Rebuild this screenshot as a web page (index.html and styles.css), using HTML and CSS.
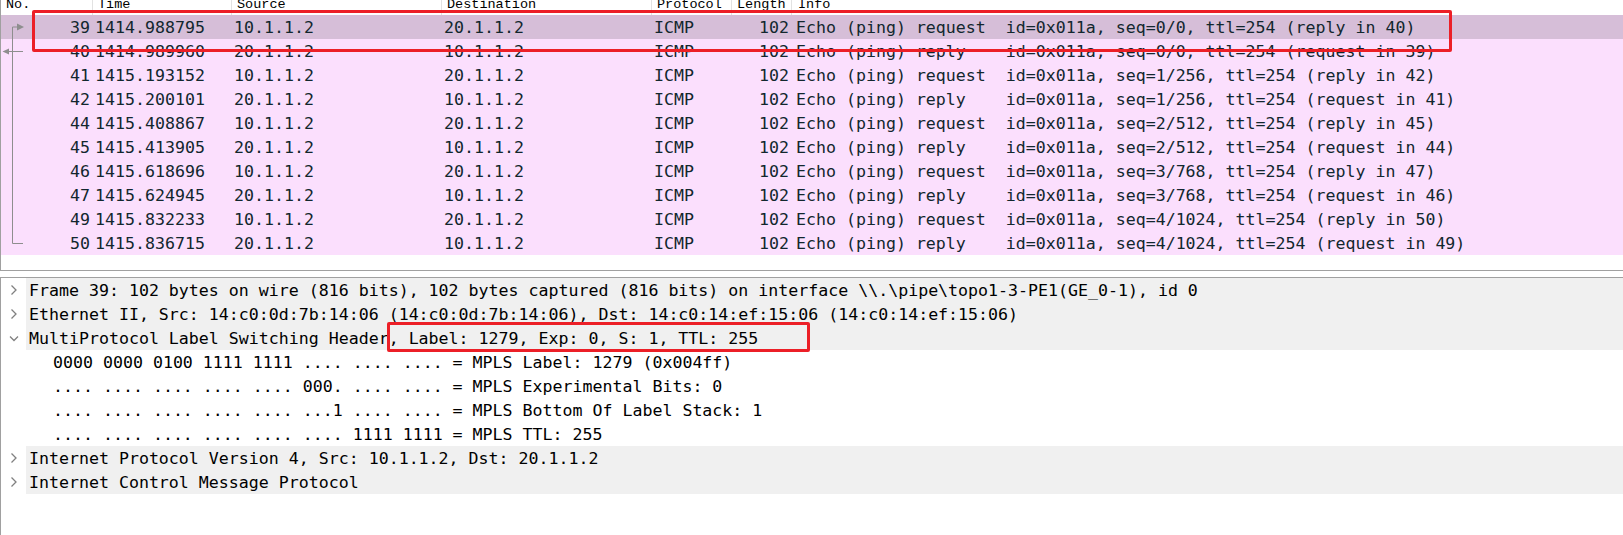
FILE: index.html
```html
<!DOCTYPE html>
<html>
<head>
<meta charset="utf-8">
<link rel="stylesheet" href="styles.css">
</head>
<body>
<div class="app">
  <div class="packets">
    <div class="head">
      <div class="hc">No.</div>
      <div class="hc">Time</div>
      <div class="hc">Source</div>
      <div class="hc">Destination</div>
      <div class="hc">Protocol</div>
      <div class="hc">Length</div>
      <div class="hc last">Info</div>
    </div>
    <div class="row sel">
      <div class="no"><svg class="rel" viewBox="0 0 26 24"><path d="M11.5 12V24M11.5 12H18" /><polygon points="16,8.5 23,12 16,15.5" /></svg><span>39</span></div>
      <div class="c">1414.988795</div><div class="c">10.1.1.2</div><div class="c">20.1.1.2</div><div class="c">ICMP</div><div class="c r">102</div><div class="c info">Echo (ping) request  id=0x011a, seq=0/0, ttl=254 (reply in 40)</div>
    </div>
    <div class="row">
      <div class="no"><svg class="rel" viewBox="0 0 26 24"><path d="M11.5 0V24M7 12.5H22" /><polygon points="1.5,12.5 8,9.5 8,15.5" /></svg><span>40</span></div>
      <div class="c">1414.989960</div><div class="c">20.1.1.2</div><div class="c">10.1.1.2</div><div class="c">ICMP</div><div class="c r">102</div><div class="c info">Echo (ping) reply    id=0x011a, seq=0/0, ttl=254 (request in 39)</div>
    </div>
    <div class="row">
      <div class="no"><svg class="rel" viewBox="0 0 26 24"><path d="M11.5 0V24" /></svg><span>41</span></div>
      <div class="c">1415.193152</div><div class="c">10.1.1.2</div><div class="c">20.1.1.2</div><div class="c">ICMP</div><div class="c r">102</div><div class="c info">Echo (ping) request  id=0x011a, seq=1/256, ttl=254 (reply in 42)</div>
    </div>
    <div class="row">
      <div class="no"><svg class="rel" viewBox="0 0 26 24"><path d="M11.5 0V24" /></svg><span>42</span></div>
      <div class="c">1415.200101</div><div class="c">20.1.1.2</div><div class="c">10.1.1.2</div><div class="c">ICMP</div><div class="c r">102</div><div class="c info">Echo (ping) reply    id=0x011a, seq=1/256, ttl=254 (request in 41)</div>
    </div>
    <div class="row">
      <div class="no"><svg class="rel" viewBox="0 0 26 24"><path d="M11.5 0V24" /></svg><span>44</span></div>
      <div class="c">1415.408867</div><div class="c">10.1.1.2</div><div class="c">20.1.1.2</div><div class="c">ICMP</div><div class="c r">102</div><div class="c info">Echo (ping) request  id=0x011a, seq=2/512, ttl=254 (reply in 45)</div>
    </div>
    <div class="row">
      <div class="no"><svg class="rel" viewBox="0 0 26 24"><path d="M11.5 0V24" /></svg><span>45</span></div>
      <div class="c">1415.413905</div><div class="c">20.1.1.2</div><div class="c">10.1.1.2</div><div class="c">ICMP</div><div class="c r">102</div><div class="c info">Echo (ping) reply    id=0x011a, seq=2/512, ttl=254 (request in 44)</div>
    </div>
    <div class="row">
      <div class="no"><svg class="rel" viewBox="0 0 26 24"><path d="M11.5 0V24" /></svg><span>46</span></div>
      <div class="c">1415.618696</div><div class="c">10.1.1.2</div><div class="c">20.1.1.2</div><div class="c">ICMP</div><div class="c r">102</div><div class="c info">Echo (ping) request  id=0x011a, seq=3/768, ttl=254 (reply in 47)</div>
    </div>
    <div class="row">
      <div class="no"><svg class="rel" viewBox="0 0 26 24"><path d="M11.5 0V24" /></svg><span>47</span></div>
      <div class="c">1415.624945</div><div class="c">20.1.1.2</div><div class="c">10.1.1.2</div><div class="c">ICMP</div><div class="c r">102</div><div class="c info">Echo (ping) reply    id=0x011a, seq=3/768, ttl=254 (request in 46)</div>
    </div>
    <div class="row">
      <div class="no"><svg class="rel" viewBox="0 0 26 24"><path d="M11.5 0V24" /></svg><span>49</span></div>
      <div class="c">1415.832233</div><div class="c">10.1.1.2</div><div class="c">20.1.1.2</div><div class="c">ICMP</div><div class="c r">102</div><div class="c info">Echo (ping) request  id=0x011a, seq=4/1024, ttl=254 (reply in 50)</div>
    </div>
    <div class="row">
      <div class="no"><svg class="rel" viewBox="0 0 26 24"><path d="M11.5 0V12.5H22" /></svg><span>50</span></div>
      <div class="c">1415.836715</div><div class="c">20.1.1.2</div><div class="c">10.1.1.2</div><div class="c">ICMP</div><div class="c r">102</div><div class="c info">Echo (ping) reply    id=0x011a, seq=4/1024, ttl=254 (request in 49)</div>
    </div>
  </div>
  <div class="splitter"></div>
  <div class="details">
    <div class="node"><div class="tw"><svg class="chev" viewBox="0 0 8 12"><polyline points="1.5,1.5 6,6 1.5,10.5" /></svg></div><div class="txt">Frame 39: 102 bytes on wire (816 bits), 102 bytes captured (816 bits) on interface \\.\pipe\topo1-3-PE1(GE_0-1), id 0</div></div>
    <div class="node"><div class="tw"><svg class="chev" viewBox="0 0 8 12"><polyline points="1.5,1.5 6,6 1.5,10.5" /></svg></div><div class="txt">Ethernet II, Src: 14:c0:0d:7b:14:06 (14:c0:0d:7b:14:06), Dst: 14:c0:14:ef:15:06 (14:c0:14:ef:15:06)</div></div>
    <div class="node"><div class="tw"><svg class="chevd" viewBox="0 0 10 7"><polyline points="1,1.5 5,5.5 9,1.5" /></svg></div><div class="txt">MultiProtocol Label Switching Header, Label: 1279, Exp: 0, S: 1, TTL: 255</div></div>
    <div class="node child"><div class="tw"></div><div class="txt">0000 0000 0100 1111 1111 .... .... .... = MPLS Label: 1279 (0x004ff)</div></div>
    <div class="node child"><div class="tw"></div><div class="txt">.... .... .... .... .... 000. .... .... = MPLS Experimental Bits: 0</div></div>
    <div class="node child"><div class="tw"></div><div class="txt">.... .... .... .... .... ...1 .... .... = MPLS Bottom Of Label Stack: 1</div></div>
    <div class="node child"><div class="tw"></div><div class="txt">.... .... .... .... .... .... 1111 1111 = MPLS TTL: 255</div></div>
    <div class="node"><div class="tw"><svg class="chev" viewBox="0 0 8 12"><polyline points="1.5,1.5 6,6 1.5,10.5" /></svg></div><div class="txt">Internet Protocol Version 4, Src: 10.1.1.2, Dst: 20.1.1.2</div></div>
    <div class="node"><div class="tw"><svg class="chev" viewBox="0 0 8 12"><polyline points="1.5,1.5 6,6 1.5,10.5" /></svg></div><div class="txt">Internet Control Message Protocol</div></div>
  </div>
  <div class="mark mark-row"></div>
  <div class="mark mark-label"></div>
</div>
</body>
</html>
```

FILE: styles.css
```css
* { box-sizing: border-box; }
html, body { margin: 0; padding: 0; background: #fff; }
body { font-family: "DejaVu Sans Mono", "Liberation Mono", monospace; }

.app {
  position: relative;
  width: 1623px;
  height: 535px;
  overflow: hidden;
  display: flex;
  flex-direction: column;
}

.packets {
  height: 271px;
  flex: none;
  border-left: 1px solid #a0a0a0;
  border-bottom: 1px solid #a0a0a0;
  background: #fff;
}

.head {
  display: grid;
  grid-template-columns: 92px 139px 210px 210px 80px 60px 1fr;
  height: 15px;
  overflow: hidden;
}
.hc {
  height: 15px;
  line-height: 9px;
  font-family: "Liberation Mono", monospace;
  font-size: 13.5px;
  color: #000;
  padding-left: 5px;
  border-right: 1px solid #e2e2e2;
  white-space: pre;
}
.hc.last { border-right: none; padding-left: 6px; }

.row {
  display: grid;
  grid-template-columns: 92px 139px 210px 210px 80px 60px 1fr;
  height: 24px;
  line-height: 22px;
  padding-top: 2px;
  background: #fbdffd;
  color: #12272e;
  font-size: 16.6px;
  white-space: pre;
}
.row.sel { background: #d6bed8; }

.no {
  display: flex;
  justify-content: space-between;
  align-items: center;
  padding-right: 3px;
  margin-top: -2px;
  height: 24px;
}
.no span { padding-top: 2px; line-height: 22px; }
.rel {
  width: 26px;
  height: 24px;
  flex: none;
}
.rel path { stroke: #8e8e8e; stroke-width: 1; fill: none; }
.rel polygon { fill: #8e8e8e; }

.c { padding-left: 2px; overflow: hidden; }
.c.r { text-align: right; padding-left: 0; padding-right: 3px; }
.c.info { padding-left: 4px; }

.splitter { height: 6px; flex: none; background: #fff; }

.details {
  flex: 1;
  border-top: 1px solid #a0a0a0;
  border-left: 1px solid #a0a0a0;
  background: #fff;
}
.node {
  display: flex;
  height: 24px;
  font-size: 16.6px;
  color: #000;
  white-space: pre;
}
.tw {
  width: 25px;
  flex: none;
  display: flex;
  align-items: center;
  justify-content: center;
}
.chev { width: 8px; height: 12px; }
.chevd { width: 10px; height: 7px; }
.chev polyline, .chevd polyline { fill: none; stroke: #808080; stroke-width: 1.3; }
.txt {
  flex: 1;
  padding-left: 3px;
  padding-top: 2px;
  line-height: 22px;
  background: #f0f0f0;
}
.node.child .txt { background: transparent; padding-left: 27px; }

.mark {
  position: absolute;
  border: 3px solid #ec1f27;
  border-radius: 2px;
}
.mark-row { left: 32px; top: 10px; width: 1420px; height: 42px; }
.mark-label { left: 387px; top: 322px; width: 423px; height: 30px; }
```
